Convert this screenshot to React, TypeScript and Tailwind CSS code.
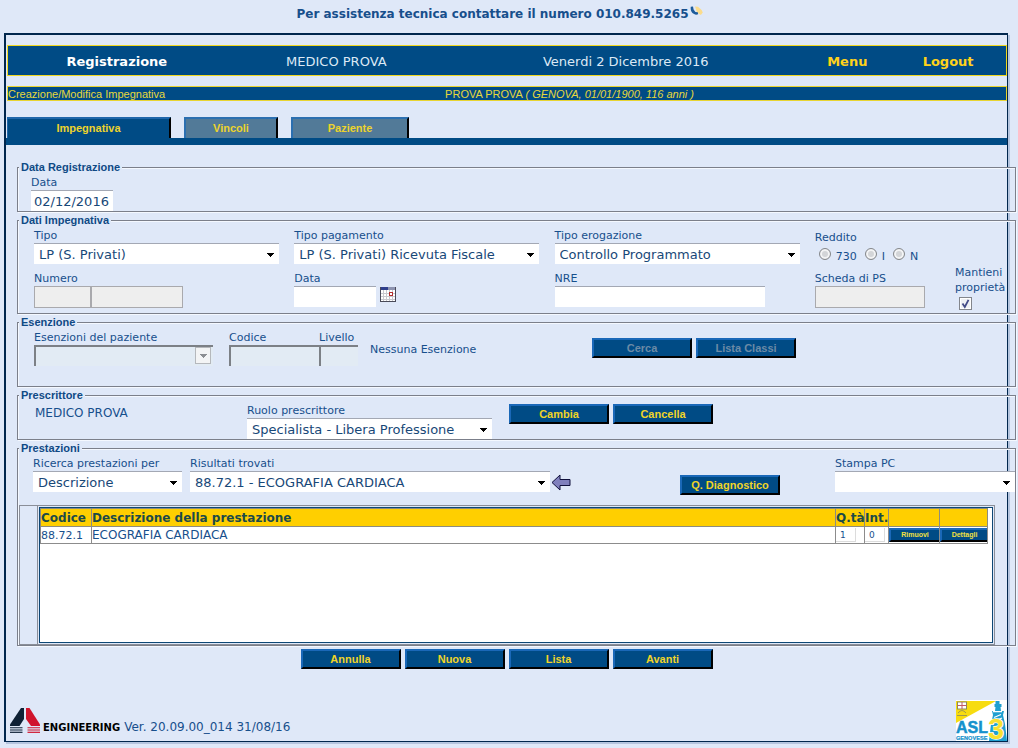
import React from "react";

type SelectProps = {
  id: string;
  value: string;
  label?: string;
  className?: string;
};

function Caret({ className = "" }: { className?: string }) {
  return (
    <svg viewBox="0 0 7 4" className={"h-1 w-[7px] " + className} aria-hidden="true" shapeRendering="crispEdges">
      <path d="M0 0h7L3.5 4z" fill="currentColor" />
    </svg>
  );
}

function Select({ id, value, label, className = "" }: SelectProps) {
  return (
    <div className={"relative max-w-full " + className}>
      <select
        id={id}
        aria-label={label}
        className="block h-[21px] w-full appearance-none border-t border-[#a3a8b4] bg-white pt-0.5 pr-5 pl-[5px] text-[13px] leading-[18px] text-[#184878]"
      >
        <option>{value}</option>
      </select>
      <Caret className="pointer-events-none absolute top-[10px] right-[5px] text-black" />
    </div>
  );
}

function Field({
  label,
  id,
  className = "",
  children,
}: {
  label: string;
  id: string;
  className?: string;
  children: React.ReactNode;
}) {
  return (
    <div className={className}>
      <label htmlFor={id} className="block pt-0.5 text-[11px] leading-[14px] whitespace-nowrap">
        {label}
      </label>
      {children}
    </div>
  );
}

function Panel({
  title,
  className = "",
  children,
}: {
  title: string;
  className?: string;
  children: React.ReactNode;
}) {
  return (
    <fieldset
      className={
        "mb-px min-w-0 border border-[#7b7f8a] shadow-[1px_1px_0_#f4f8ff,inset_1px_1px_0_#f4f8ff] " + className
      }
    >
      <legend className="ml-px bg-[#dfe8f8] px-0.5 font-['Liberation_Sans',sans-serif] text-[11px] leading-[14px] font-bold text-[#0f4a85]">
        {title}
      </legend>
      {children}
    </fieldset>
  );
}

function Button({ children, disabled = false }: { children: React.ReactNode; disabled?: boolean }) {
  return (
    <button
      type="button"
      disabled={disabled}
      className="h-5 w-[100px] shrink-0 border-2 border-t-[#1a68b8] border-r-black border-b-black border-l-[#1a68b8] bg-[#004b85] font-['Liberation_Sans',sans-serif] text-[11px] leading-4 font-bold whitespace-nowrap text-[#f0d428] disabled:text-[#6b8aa6]"
    >
      {children}
    </button>
  );
}

function RowButton({ children }: { children: React.ReactNode }) {
  return (
    <button
      type="button"
      className="block h-[14px] w-full border-t-2 border-b-2 border-l-2 border-t-[#1a68b8] border-b-black border-l-[#1a68b8] bg-[#004b85] font-['Liberation_Sans',sans-serif] text-[7px] leading-[10px] font-bold text-[#f0e040]"
    >
      {children}
    </button>
  );
}

const boxInput = "block h-[21px] border-t border-[#a3a8b4] bg-white px-[3px] text-[13px] text-[#184878]";
const greyInput = "block h-[22px] border border-[#a9a9ad] bg-[#eeeeee]";
const sunkInput = "block h-[21px] border-t-2 border-l-2 border-[#7c8086] bg-[#e2ebf4]";

function Radio({ label, id }: { label: string; id: string }) {
  return (
    <span className="flex items-start gap-[5px]">
      <input
        type="radio"
        id={id}
        name="reddito"
        className="size-3 appearance-none rounded-full border border-[#85888c] bg-[#d3d5d8] shadow-[inset_0_0_0_2px_#f3f4f5]"
      />
      <label htmlFor={id} className="pt-0.5 text-[11px] leading-[14px]">
        {label}
      </label>
    </span>
  );
}

function PhoneIcon() {
  return (
    <svg viewBox="0 0 14 10" className="h-[10px] w-[14px]" aria-hidden="true">
      <path d="M5 .5l3 .2 3.600 3.400 1.200 2.400-2 2.500L7 6.500z" fill="#fbdc8c" />
      <path d="M.8.8L3 .6l.6 2.800L5.400 6l2.400.2.4 2C4.800 9.800-.2 7 .8.8z" fill="#1d5c9c" />
    </svg>
  );
}

function CalendarIcon() {
  return (
    <svg viewBox="0 0 16 15" className="h-[15px] w-4" aria-hidden="true" shapeRendering="crispEdges">
      <rect width="16" height="15" fill="#4a4a58" />
      <rect x="1" y="1" width="14" height="13" fill="#fff" />
      <rect x="1" y="0" width="7" height="3" fill="#2f3f8c" />
      <rect x="8" y="0" width="7" height="3" fill="#8d93b0" />
      <path d="M1 6.500h14M1 9.500h14M1 12h14M3.500 3v11M6.500 3v11M9.500 3v11M12.500 3v11" stroke="#c9c9cf" />
      <rect x="9.500" y="5.500" width="3" height="3" fill="#fff" stroke="#b23030" />
    </svg>
  );
}

function ArrowIcon() {
  return (
    <svg viewBox="0 0 20 17" className="h-[17px] w-5" aria-hidden="true">
      <path d="M1 8.500L9 1v4.500h10v6H9V16z" fill="#8080bd" stroke="#10103c" strokeLinejoin="round" />
    </svg>
  );
}

function EngineeringMark() {
  return (
    <svg viewBox="0 0 30 25" className="h-[25px] w-[30px]" aria-hidden="true">
      <path d="M11 0h3v11L9.500 18H0v-1.500z" fill="#0f2135" />
      <path d="M16 0h3.500L30 16.500V18h-9l-5-7z" fill="#d0142c" />
      <path d="M0 19.800h12.500M0 22h12.500" stroke="#0f2135" strokeWidth="1.100" />
      <path d="M0 24.300h12.500" stroke="#0f2135" strokeWidth="1.200" />
      <path d="M17.500 19.800H30M17.500 22H30" stroke="#d0142c" strokeWidth="1.100" />
      <path d="M17.500 24.300H30" stroke="#d0142c" strokeWidth="1.200" />
    </svg>
  );
}

function AslLogo() {
  return (
    <svg viewBox="0 0 51 41" className="h-[41px] w-[51px] overflow-visible" role="img" aria-label="ASL 3 Genovese">
      <rect width="51" height="41" fill="#fff" />
      <path d="M0 1h40L0 23z" fill="#f7dc10" />
      <rect x="1.500" y="2" width="9" height="7" fill="#fff" stroke="#8d8a60" />
      <path d="M6 2v7M1.500 5.500h9" stroke="#c05a66" />
      <path d="M2 13q4-5 8 0M1 15.500h10" fill="none" stroke="#a09a50" />
      <path d="M39.500 1h4v3h2v3h-1l.5 4h3l-1 4 2 9 2 17H33l2-17 2-9-1-4h3l.5-4h-1V4h1z" fill="#1f9fd0" />
      <path d="M37 11.700h9M38 17.500l7-3M37 22l9-4" stroke="#fff" strokeWidth="1.200" />
      <text
        x="0"
        y="33"
        fontFamily="Liberation Sans, sans-serif"
        fontWeight="700"
        fontSize="16"
        fill="#1591cc"
        stroke="#1591cc"
        strokeWidth=".5"
      >
        ASL
      </text>
      <text
        x="0"
        y="39.500"
        fontFamily="Liberation Sans, sans-serif"
        fontWeight="700"
        fontSize="5.600"
        fill="#1591cc"
        stroke="#1591cc"
        strokeWidth=".2"
      >
        GENOVESE
      </text>
      <text
        x="32"
        y="39"
        fontFamily="Liberation Sans, sans-serif"
        fontWeight="700"
        fontSize="29"
        fill="#f7e030"
        stroke="#fff"
        strokeWidth="1.400"
        paintOrder="stroke"
      >
        3
      </text>
    </svg>
  );
}

export default function App() {
  return (
    <div className="flex min-h-screen flex-col bg-[#dfe8f8] pb-1.5 font-['DejaVu_Sans',Verdana,sans-serif] text-[#174f8c]">
      <header className="flex h-[33px] items-start justify-center gap-px pt-1.5 pr-[18px]">
        <p className="text-xs leading-4 font-bold">Per assistenza tecnica contattare il numero 010.849.5265</p>
        <PhoneIcon />
      </header>

      <main className="mr-2.5 ml-1 flex flex-1 flex-col border-t-2 border-r border-b border-l-2 border-[#00264d] pt-[10px] shadow-[2px_2px_0_#b5c5df]">
        <div className="ml-px grid h-[31px] grid-cols-[218fr_222fr_358fr_86fr_116fr] items-center border border-solid border-[#f0d820] bg-[#004b85] pt-0.5 text-center text-[13px] text-[#dce9f5]">
          <h1 className="font-bold text-white">Registrazione</h1>
          <span>MEDICO PROVA</span>
          <span>Venerdi 2 Dicembre 2016</span>
          <a href="#menu" className="font-bold text-[#ffd21a]">
            Menu
          </a>
          <a href="#logout" className="font-bold text-[#ffd21a]">
            Logout
          </a>
        </div>

        <div className="mt-[10px] ml-px grid h-[15px] grid-cols-[438fr_562fr] items-center border border-[#e8d430] bg-[#004b85] font-['Liberation_Sans',sans-serif] text-[11px] leading-3 text-[#e6d83c]">
          <span>Creazione/Modifica Impegnativa</span>
          <span>
            PROVA PROVA <i>( GENOVA, 01/01/1900, 116 anni )</i>
          </span>
        </div>

        <nav className="mt-4 ml-px flex gap-[13px] font-['Liberation_Sans',sans-serif] text-[11px] font-bold text-[#ecd32c]">
          <a
            href="#impegnativa"
            className="flex h-[21px] w-[164px] items-center justify-center border-t-2 border-r-2 border-l border-t-[#1f66aa] border-r-black border-l-[#1f66aa] bg-[#004b85]"
          >
            Impegnativa
          </a>
          <a
            href="#vincoli"
            className="flex h-[21px] w-[94px] items-center justify-center border-t-2 border-r-2 border-l-2 border-t-[#2b6fb0] border-r-black border-l-[#2b6fb0] bg-[#527a98]"
          >
            Vincoli
          </a>
          <a
            href="#paziente"
            className="flex h-[21px] w-[118px] items-center justify-center border-t-2 border-r-2 border-l-2 border-t-[#2b6fb0] border-r-black border-l-[#2b6fb0] bg-[#527a98]"
          >
            Paziente
          </a>
        </nav>
        <div className="h-[7px] bg-[#004b85]" />

        <form className="mt-[15px] -mr-[9px] ml-[11px]">
          <Panel title="Data Registrazione">
            <Field label="Data" id="data-reg" className="ml-[13px]">
              <input id="data-reg" className={boxInput + " w-[82px]"} defaultValue="02/12/2016" />
            </Field>
          </Panel>

          <Panel title="Dati Impegnativa">
            <div className="ml-4 grid grid-cols-[13fr_13fr_13fr_7fr_3fr] pb-[5px]">
              <div className="flex min-w-0 flex-col gap-[6px]">
                <Field label="Tipo" id="tipo">
                  <Select id="tipo" value="LP (S. Privati)" className="w-[245px]" />
                </Field>
                <Field label="Numero" id="numero">
                  <div className="flex">
                    <input id="numero" disabled className={greyInput + " w-[57px]"} />
                    <input aria-label="Numero, seconda parte" disabled className={greyInput + " w-[92px]"} />
                  </div>
                </Field>
              </div>
              <div className="flex min-w-0 flex-col gap-[6px]">
                <Field label="Tipo pagamento" id="pagamento">
                  <Select id="pagamento" value="LP (S. Privati) Ricevuta Fiscale" className="w-[245px]" />
                </Field>
                <Field label="Data" id="data-imp">
                  <div className="flex items-start gap-1">
                    <input id="data-imp" className={boxInput + " w-[82px]"} />
                    <button type="button" aria-label="Calendario" className="mt-px">
                      <CalendarIcon />
                    </button>
                  </div>
                </Field>
              </div>
              <div className="flex min-w-0 flex-col gap-[6px]">
                <Field label="Tipo erogazione" id="erogazione">
                  <Select id="erogazione" value="Controllo Programmato" className="w-[245px]" />
                </Field>
                <Field label="NRE" id="nre">
                  <input id="nre" className={boxInput + " w-[210px]"} />
                </Field>
              </div>
              <div className="flex min-w-0 flex-col gap-[6px]">
                <div className="h-[37px] pt-[3px]" role="radiogroup" aria-label="Reddito">
                  <span className="block text-[11px] leading-4">Reddito</span>
                  <div className="mt-0.5 ml-1 flex gap-2">
                    <Radio id="reddito-730" label="730" />
                    <Radio id="reddito-i" label="I" />
                    <Radio id="reddito-n" label="N" />
                  </div>
                </div>
                <Field label="Scheda di PS" id="scheda">
                  <input id="scheda" disabled className={greyInput + " w-[110px]"} />
                </Field>
              </div>
              <div className="-mb-0.5 flex flex-col self-end">
                <label htmlFor="mantieni" className="text-[11px] leading-[15px]">
                  Mantieni proprietà
                </label>
                <span className="relative mt-0.5 ml-1 block size-[13px]">
                  <input
                    id="mantieni"
                    type="checkbox"
                    defaultChecked
                    className="block size-[13px] appearance-none border border-[#83868c] bg-[#eef0f4] shadow-[inset_0_0_0_1px_#fff]"
                  />
                  <svg viewBox="0 0 13 13" className="pointer-events-none absolute inset-0 size-[13px]" aria-hidden="true">
                    <path d="M3.500 6.500l2.300 3.500L9.500 2.800" fill="none" stroke="#434b87" strokeWidth="1.800" />
                  </svg>
                </span>
              </div>
            </div>
          </Panel>

          <Panel title="Esenzione">
            <div className="ml-4 flex pb-5">
              <Field label="Esenzioni del paziente" id="esenzioni" className="mr-4">
                <div className="relative w-[179px]">
                  <select
                    id="esenzioni"
                    disabled
                    className="block h-[21px] w-full appearance-none border-t-2 border-l-2 border-[#7c8086] bg-[#e2ebf4] opacity-100"
                  />
                  <span className="pointer-events-none absolute top-[2px] right-[2px] flex h-[17px] w-4 items-center justify-center border border-[#b5b8bc] bg-[#f3f4f5] text-[#8b8e92]">
                    <Caret />
                  </span>
                </div>
              </Field>
              <Field label="Codice" id="codice">
                <input id="codice" disabled className={sunkInput + " w-[90px]"} />
              </Field>
              <Field label="Livello" id="livello">
                <input id="livello" disabled className={sunkInput + " w-[39px]"} />
              </Field>
              <p className="mt-[13px] ml-3 w-[222px] text-[11px] leading-4">Nessuna Esenzione</p>
              <div className="mt-[9px] flex gap-1">
                <Button disabled>Cerca</Button>
                <Button disabled>Lista Classi</Button>
              </div>
            </div>
          </Panel>

          <Panel title="Prescrittore">
            <div className="ml-[17px] flex">
              <p className="mt-[3px] w-[212px] text-xs leading-4">MEDICO PROVA</p>
              <Field label="Ruolo prescrittore" id="ruolo">
                <Select id="ruolo" value="Specialista - Libera Professione" className="w-[245px]" />
              </Field>
              <div className="mt-0.5 ml-[17px] flex gap-1">
                <Button>Cambia</Button>
                <Button>Cancella</Button>
              </div>
            </div>
          </Panel>

          <Panel title="Prestazioni">
            <div className="ml-[15px] flex">
              <Field label="Ricerca prestazioni per" id="ricerca" className="mr-2">
                <Select id="ricerca" value="Descrizione" className="w-[149px]" />
              </Field>
              <Field label="Risultati trovati" id="risultati">
                <Select id="risultati" value="88.72.1 - ECOGRAFIA CARDIACA" className="w-[360px]" />
              </Field>
              <button type="button" aria-label="Inserisci prestazione" className="mt-[19px] ml-px self-start">
                <ArrowIcon />
              </button>
              <div className="mt-5 ml-auto flex">
                <Button>Q. Diagnostico</Button>
              </div>
              <Field label="Stampa PC" id="stampa" className="ml-[55px]">
                <Select id="stampa" value="" className="w-[180px]" />
              </Field>
            </div>

            <div className="mt-[10px] mr-5 ml-px flex h-[140px] border border-[#8a8e98] pl-[17px]">
              <div className="flex-1 border-l border-[#8a8e98] p-px">
                <div className="h-full border border-[#0d4775] bg-white pr-1">
                  <table className="w-full table-fixed border-collapse text-left">
                    <colgroup>
                      <col className="w-[51px]" />
                      <col />
                      <col className="w-[29px]" />
                      <col className="w-[24px]" />
                      <col className="w-[51px]" />
                      <col className="w-[48px]" />
                    </colgroup>
                    <thead>
                      <tr className="h-[18px] bg-[#ffcf00] text-xs leading-4 whitespace-nowrap text-[#1c4a48]">
                        <th className="border border-[#8c8c80] p-0">Codice</th>
                        <th className="border border-[#8c8c80] p-0">Descrizione della prestazione</th>
                        <th className="border border-[#8c8c80] p-0">Q.tà</th>
                        <th className="border border-[#8c8c80] p-0">Int.</th>
                        <th className="border border-[#8c8c80] p-0" aria-label="Rimuovi" />
                        <th className="border border-[#8c8c80] p-0" aria-label="Dettagli" />
                      </tr>
                    </thead>
                    <tbody>
                      <tr className="h-[17px] text-[11px] leading-4">
                        <td className="border border-[#8c8c8c] p-0 pt-0.5 leading-[14px]">88.72.1</td>
                        <td className="border border-[#8c8c8c] p-0 text-xs leading-4">ECOGRAFIA CARDIACA</td>
                        <td className="border border-[#8c8c8c] p-0">
                          <input
                            aria-label="Quantità"
                            defaultValue="1"
                            className="block h-[14px] w-5 border-r border-b border-[#dcdcdc] pl-1 text-[9px]"
                          />
                        </td>
                        <td className="border border-[#8c8c8c] p-0">
                          <input
                            aria-label="Intervallo"
                            defaultValue="0"
                            className="block h-[14px] w-5 border-r border-b border-[#dcdcdc] pl-1 text-[9px]"
                          />
                        </td>
                        <td className="border border-[#8c8c8c] p-0">
                          <RowButton>Rimuovi</RowButton>
                        </td>
                        <td className="border border-[#8c8c8c] p-0">
                          <RowButton>Dettagli</RowButton>
                        </td>
                      </tr>
                    </tbody>
                  </table>
                </div>
              </div>
            </div>
          </Panel>
        </form>

        <div className="mt-0.5 flex justify-center gap-1">
          <Button>Annulla</Button>
          <Button>Nuova</Button>
          <Button>Lista</Button>
          <Button>Avanti</Button>
        </div>

        <footer className="mt-auto flex items-end pl-1">
          <div className="mb-2 flex items-end">
            <EngineeringMark />
            <span className="ml-[3px] text-[10px] leading-[10px] font-bold text-black">ENGINEERING</span>
            <span className="ml-1 text-xs leading-[11px]">Ver. 20.09.00_014 31/08/16</span>
          </div>
          <div className="ml-auto">
            <AslLogo />
          </div>
        </footer>
      </main>
    </div>
  );
}
